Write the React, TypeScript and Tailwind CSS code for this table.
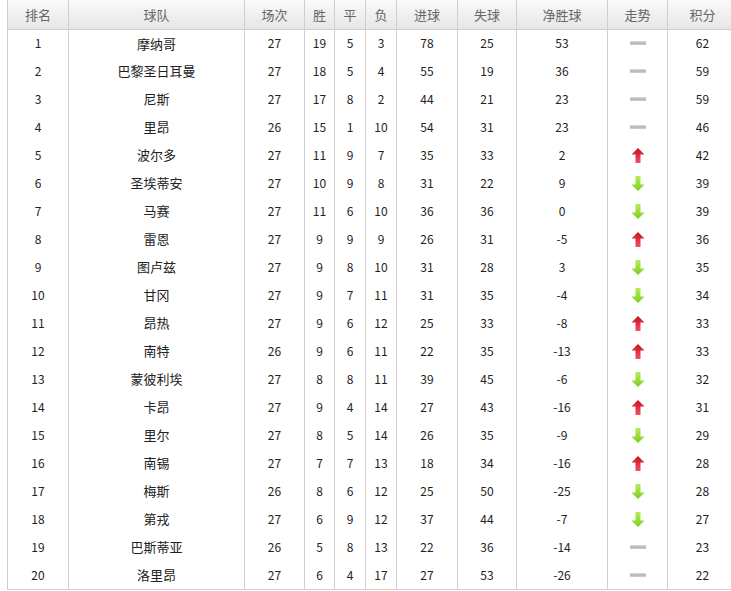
import React from "react"

type Row = [number, string, number, number, number, number, number, number, number, "flat" | "up" | "down", number]

const rows: Row[] = [
  [1, "摩纳哥", 27, 19, 5, 3, 78, 25, 53, "flat", 62],
  [2, "巴黎圣日耳曼", 27, 18, 5, 4, 55, 19, 36, "flat", 59],
  [3, "尼斯", 27, 17, 8, 2, 44, 21, 23, "flat", 59],
  [4, "里昂", 26, 15, 1, 10, 54, 31, 23, "flat", 46],
  [5, "波尔多", 27, 11, 9, 7, 35, 33, 2, "up", 42],
  [6, "圣埃蒂安", 27, 10, 9, 8, 31, 22, 9, "down", 39],
  [7, "马赛", 27, 11, 6, 10, 36, 36, 0, "down", 39],
  [8, "雷恩", 27, 9, 9, 9, 26, 31, -5, "up", 36],
  [9, "图卢兹", 27, 9, 8, 10, 31, 28, 3, "down", 35],
  [10, "甘冈", 27, 9, 7, 11, 31, 35, -4, "down", 34],
  [11, "昂热", 27, 9, 6, 12, 25, 33, -8, "up", 33],
  [12, "南特", 26, 9, 6, 11, 22, 35, -13, "up", 33],
  [13, "蒙彼利埃", 27, 8, 8, 11, 39, 45, -6, "down", 32],
  [14, "卡昂", 27, 9, 4, 14, 27, 43, -16, "up", 31],
  [15, "里尔", 27, 8, 5, 14, 26, 35, -9, "down", 29],
  [16, "南锡", 27, 7, 7, 13, 18, 34, -16, "up", 28],
  [17, "梅斯", 26, 8, 6, 12, 25, 50, -25, "down", 28],
  [18, "第戎", 27, 6, 9, 12, 37, 44, -7, "down", 27],
  [19, "巴斯蒂亚", 26, 5, 8, 13, 22, 36, -14, "flat", 23],
  [20, "洛里昂", 27, 6, 4, 17, 27, 53, -26, "flat", 22],
]

const headers = ["排名", "球队", "场次", "胜", "平", "负", "进球", "失球", "净胜球", "走势", "积分"]
const widths = [61, 176, 60, 30, 31, 31, 61, 59, 91, 60, 70]

function Trend({ kind }: { kind: Row[9] }) {
  if (kind === "flat") {
    return <div className="mx-auto h-[4px] w-[16px] bg-gradient-to-b from-[#e0e0e0] via-[#b4b4b4] to-[#d0d0d0]" />
  }
  if (kind === "up") {
    return (
      <svg width="14" height="15" viewBox="0 0 14 15" className="mx-auto block">
        <defs>
          <linearGradient id="ug" x1="0" y1="0" x2="0" y2="1">
            <stop offset="0" stopColor="#c8101a" />
            <stop offset="1" stopColor="#f0506a" />
          </linearGradient>
        </defs>
        <path d="M7 0 L13.5 6.5 L9.5 6.5 L9.5 15 L4.5 15 L4.5 6.5 L0.5 6.5 Z" fill="url(#ug)" />
      </svg>
    )
  }
  return (
    <svg width="14" height="15" viewBox="0 0 14 15" className="mx-auto block">
      <defs>
        <linearGradient id="dg" x1="0" y1="0" x2="0" y2="1">
          <stop offset="0" stopColor="#b6ec5a" />
          <stop offset="1" stopColor="#7ccf1e" />
        </linearGradient>
      </defs>
      <path d="M4.5 0 L9.5 0 L9.5 8.5 L13.5 8.5 L7 15 L0.5 8.5 L4.5 8.5 Z" fill="url(#dg)" />
    </svg>
  )
}

export default function App() {
  return (
    <div className="w-[731px] h-[591px] overflow-hidden bg-white pl-[7px]" style={{ fontFamily: '"Noto Sans CJK SC", "DejaVu Sans", sans-serif' }}>
      <table className="table-fixed border-collapse text-[12px] w-[730px]">
        <colgroup>
          {widths.map((w, i) => (
            <col key={i} style={{ width: w }} />
          ))}
        </colgroup>
        <thead>
          <tr className="h-[29px] bg-gradient-to-b from-[#fafafa] to-[#e6e6e6]">
            {headers.map((h) => (
              <th key={h} className="border border-[#cfcfcf] border-t-0 font-normal text-[#666] text-[13px] text-center p-0">
                {h}
              </th>
            ))}
          </tr>
        </thead>
        <tbody>
          {rows.map((r, ri) => (
            <tr key={r[0]} className="h-[28px]">
              {r.map((c, i) => (
                <td
                  key={i}
                  className={`border-x border-[#cfcfcf] text-center p-0 text-[#222] ${ri === rows.length - 1 ? "border-b" : ""} ${i === 1 ? "text-[13px]" : ""}`}
                >
                  {i === 9 ? <Trend kind={c as Row[9]} /> : c}
                </td>
              ))}
            </tr>
          ))}
        </tbody>
      </table>
    </div>
  )
}
